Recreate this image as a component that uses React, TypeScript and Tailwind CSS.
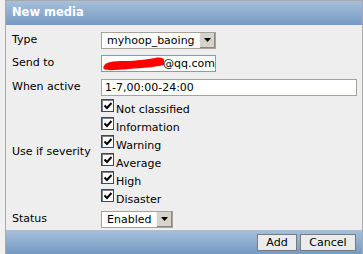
import React from "react";

const font = { fontFamily: '"DejaVu Sans", Verdana, sans-serif' };

function Select({ value, width }: { value: string; width: string }) {
  return (
    <div className={`flex h-[17px] items-stretch border border-[#a5a297] bg-white ${width}`}>
      <div className="flex-1 pl-[5px] text-[11px] leading-[15px] text-black overflow-hidden whitespace-nowrap">{value}</div>
      <div className="flex w-[16px] items-center justify-center border-l border-[#f5f5f0] bg-[#d6d3ca] shadow-[inset_-1px_-1px_0_#8a887f]">
        <svg width="7" height="4" viewBox="0 0 7 4"><path d="M0 0h7L3.5 4z" fill="#000" /></svg>
      </div>
    </div>
  );
}

function Check({ label }: { label: string }) {
  return (
    <div className="flex h-[18px] items-center">
      <div className="relative mt-[-3px] h-[13px] w-[13px] border border-[#1c5180] bg-white shadow-[inset_1px_1px_0_#808080]">
        <svg className="absolute left-[2px] top-[2px]" width="8" height="8" viewBox="0 0 8 8"><path d="M0.5 3.5L3 6L7.5 1" stroke="#000" strokeWidth="2" fill="none" /></svg>
      </div>
      <span className="ml-[2px] mt-[5px] text-[11px] text-black leading-none">{label}</span>
    </div>
  );
}

export default function App() {
  return (
    <div className="h-[254px] w-[363px] bg-[#f0f0f0] pl-[5px]" style={font}>
      <div className="flex h-full flex-col border-x border-t border-[#a9a9a9] bg-[#eeeeee]">
        <div className="flex h-[25px] items-center bg-gradient-to-b from-[#a7c0da] to-[#759ac3] pl-[6px] text-[11.5px] font-bold text-white">
          New media
        </div>
        <div className="flex-1 pl-[6px] pt-[3px] text-[11px] text-black">
          <div className="flex h-[24px] items-center">
            <div className="w-[89px]">Type</div>
            <Select value="myhoop_baoing" width="w-[115px]" />
          </div>
          <div className="flex h-[23px] items-center">
            <div className="w-[89px]">Send to</div>
            <div className="relative h-[17px] w-[115px] overflow-hidden border border-[#7f9db9] bg-white text-[11px] leading-[15px]">
              <svg className="absolute left-[1px] top-[1px]" width="62" height="14" viewBox="0 0 62 14">
                <path d="M1 9 C2 5, 10 4, 22 4 C34 4, 44 2, 52 1 C57 0, 61 1, 61 3 L61 8 C52 10, 40 11, 26 12 C14 13, 3 14, 1 12 C0 11, 0 10, 1 9z" fill="#ff0000" />
              </svg>
              <span className="absolute left-[61px] top-0">@qq.com</span>
            </div>
          </div>
          <div className="flex h-[24px] items-center">
            <div className="w-[89px]">When active</div>
            <div className="h-[17px] w-[256px] border border-[#a5a297] bg-white pl-[3px] leading-[15px]">1-7,00:00-24:00</div>
          </div>
          <div className="-mt-[1px] flex">
            <div className="flex w-[89px] items-center">Use if severity</div>
            <div className="flex flex-col">
              <Check label="Not classified" />
              <Check label="Information" />
              <Check label="Warning" />
              <Check label="Average" />
              <Check label="High" />
              <Check label="Disaster" />
            </div>
          </div>
          <div className="mt-[2px] flex h-[22px] items-center">
            <div className="w-[89px]">Status</div>
            <Select value="Enabled" width="w-[72px]" />
          </div>
        </div>
        <div className="flex h-[25px] items-center justify-end gap-[3px] bg-gradient-to-b from-[#a7c0da] to-[#759ac3] pr-[6px]">
          <button className="h-[17px] w-[40px] border border-[#7a7a7a] bg-[#ebebeb] text-[11px] leading-[15px] text-black">Add</button>
          <button className="h-[17px] w-[56px] border border-[#7a7a7a] bg-[#ebebeb] text-[11px] leading-[15px] text-black">Cancel</button>
        </div>
      </div>
    </div>
  );
}
